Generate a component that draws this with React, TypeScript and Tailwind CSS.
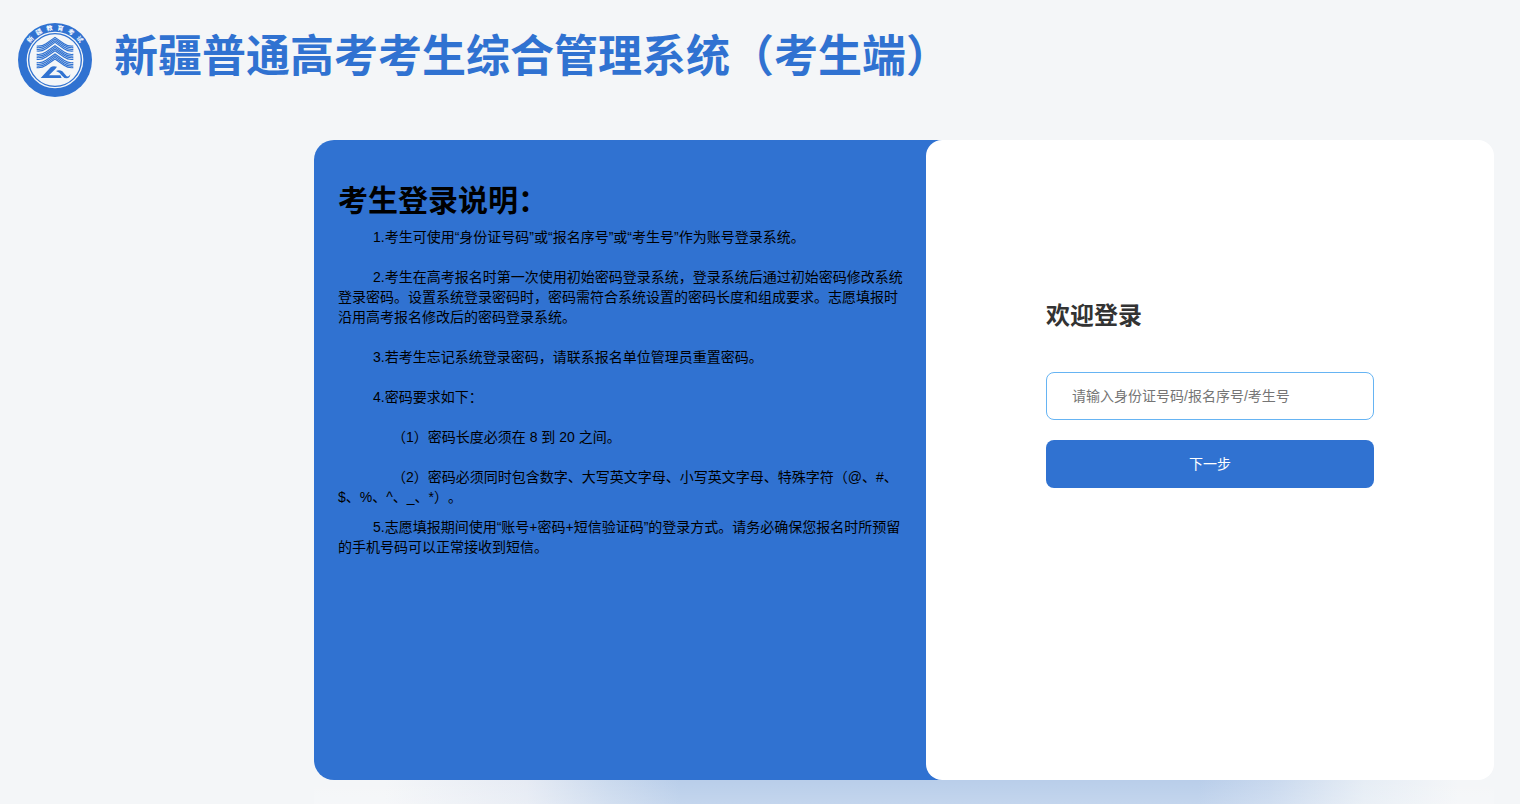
import { useState } from 'react';

const notices = [
  { text: '1.考生可使用“身份证号码”或“报名序号”或“考生号”作为账号登录系统。', className: 'indent-[35px] mb-5' },
  {
    text: '2.考生在高考报名时第一次使用初始密码登录系统，登录系统后通过初始密码修改系统登录密码。设置系统登录密码时，密码需符合系统设置的密码长度和组成要求。志愿填报时沿用高考报名修改后的密码登录系统。',
    className: 'indent-[35px] mb-5',
  },
  { text: '3.若考生忘记系统登录密码，请联系报名单位管理员重置密码。', className: 'indent-[35px] mb-5' },
  { text: '4.密码要求如下：', className: 'indent-[35px] mb-5' },
  { text: '（1）密码长度必须在 8 到 20 之间。', className: 'indent-[54px] mb-5' },
  {
    text: '（2）密码必须同时包含数字、大写英文字母、小写英文字母、特殊字符（@、#、$、%、^、_、*）。',
    className: 'indent-[54px] mb-[10px]',
  },
  {
    text: '5.志愿填报期间使用“账号+密码+短信验证码”的登录方式。请务必确保您报名时所预留的手机号码可以正常接收到短信。',
    className: 'indent-[35px]',
  },
];

const ringChars = [
  { char: '新', angle: -50 },
  { char: '疆', angle: -30 },
  { char: '教', angle: -10 },
  { char: '育', angle: 10 },
  { char: '考', angle: 30 },
  { char: '试', angle: 50 },
];

function Logo() {
  return (
    <svg viewBox="24 24 222 222" className="size-[74px] shrink-0" aria-hidden="true">
      <circle cx="135" cy="135" r="111" fill="#3072d1" />
      <circle cx="135" cy="135" r="85" fill="#f4f6f8" />
      <circle cx="135" cy="135" r="79" fill="none" stroke="#3072d1" strokeWidth="4" />
      {ringChars.map(({ char, angle }) => (
        <text
          key={char}
          x="135"
          y="45"
          textAnchor="middle"
          transform={`rotate(${angle} 135 135)`}
          fill="#fff"
          fontSize="19"
          fontWeight="700"
        >
          {char}
        </text>
      ))}
      <g fill="none" stroke="#3072d1" strokeWidth="3.4">
        {[0, 25, 50].map((top) => (
          <g key={top} transform={`translate(0 ${top})`}>
            <path d="M80 93 Q95 95 108 86 L135 67 L162 86 Q175 95 190 93" />
            <path d="M80 98 Q95 100 108 91 L135 72 L162 91 Q175 100 190 98" />
            <path d="M80 103 Q95 105 108 96 L135 77 L162 96 Q175 105 190 103" />
            <path d="M80 108 Q95 110 108 101 L135 82 L162 101 Q175 110 190 108" />
          </g>
        ))}
      </g>
      <path d="M92 189 L122 157 Q129 151 141 155 L136 162 L117 181 L151 181 L155 189 Z" fill="#3072d1" />
      <path
        d="M138 168 Q148 163 157 169 L170 184 Q176 187 181 178 Q180 190 170 190 Q162 190 156 182 Q149 171 138 168 Z"
        fill="#3072d1"
      />
    </svg>
  );
}

export default function App() {
  const [account, setAccount] = useState('');

  return (
    <div
      lang="zh-CN"
      className="min-h-screen overflow-hidden bg-[#f4f6f8] font-['Liberation_Sans','Noto_Sans_CJK_SC',sans-serif] [text-spacing-trim:space-all]"
    >
      <header className="flex items-center gap-[22px] px-[18px] pt-[23px]">
        <Logo />
        <h1 className="pb-1.5 text-[44px] leading-[66px] font-bold text-[#3072d1]">
          新疆普通高考考生综合管理系统（考生端）
        </h1>
      </header>

      <main className="mt-[43px] mr-[26px] ml-auto max-w-[1180px]">
        <div className="flex min-h-[640px]">
          <section className="-mr-5 flex-1 rounded-l-[20px] bg-[#3072d1] pt-[41px] pr-10 pl-6 text-black">
            <h2 className="mb-1.5 text-[30px] leading-10 font-bold">考生登录说明：</h2>
            <div className="text-sm leading-5">
              {notices.map((notice) => (
                <p key={notice.text} className={notice.className}>
                  {notice.text}
                </p>
              ))}
            </div>
          </section>

          <section className="relative w-[568px] rounded-2xl bg-white px-[120px] pt-40">
            <form onSubmit={(e) => e.preventDefault()}>
              <h2 className="mb-10 text-2xl leading-8 font-bold text-[#333]">欢迎登录</h2>
              <input
                type="text"
                aria-label="账号"
                value={account}
                onChange={(e) => setAccount(e.target.value)}
                placeholder="请输入身份证号码/报名序号/考生号"
                className="mb-5 block h-12 w-full rounded-lg border border-[#66b4f3] px-[25px] text-sm text-[#333] outline-none placeholder:text-[#757575]"
              />
              <button type="submit" className="block h-12 w-full rounded-lg bg-[#3072d1] text-sm text-white">
                下一步
              </button>
            </form>
          </section>
        </div>
        {/* soft glow under the card */}
        <div className="h-6 bg-[linear-gradient(to_right,#f4f6f8_6%,#e6ebf4_18%,#cbdaee_25%,#b9ceea_31%,#b9ceea_75%,#c8d8ee_81%,#e6edf5_89%,#f4f6f8_97%)]">
          <div className="h-full bg-linear-to-b from-white/0 to-white/15" />
        </div>
      </main>
    </div>
  );
}
